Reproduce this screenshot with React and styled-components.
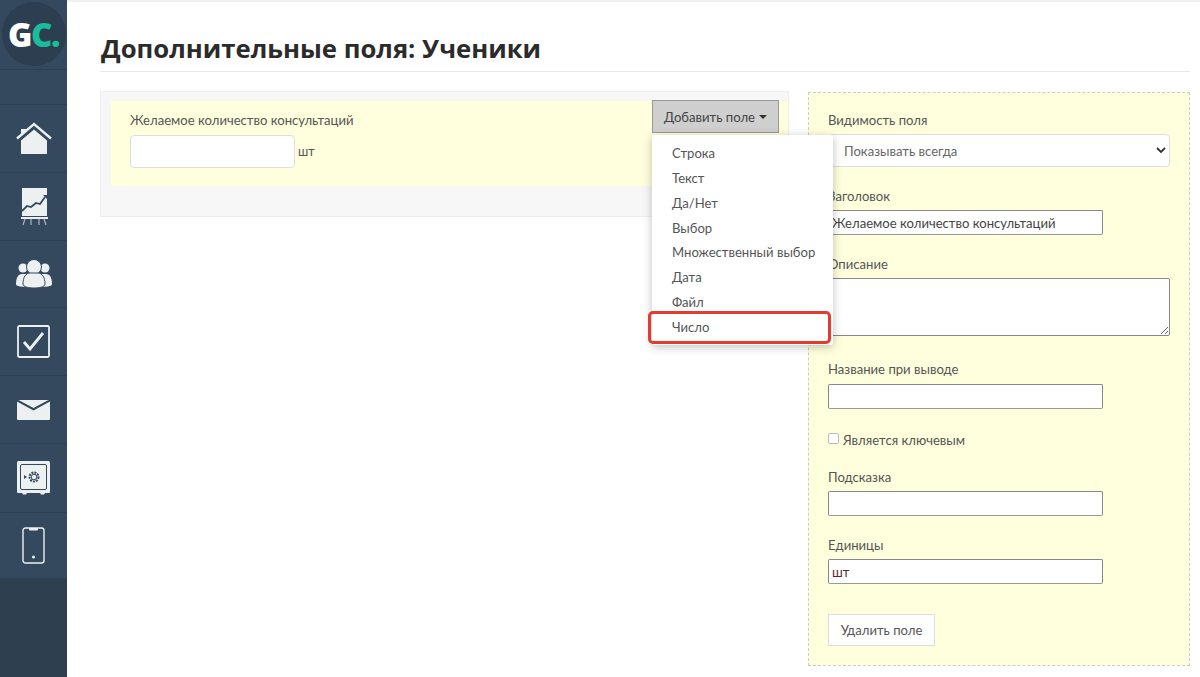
import React from 'react';
import styled, { createGlobalStyle } from 'styled-components';

const GlobalStyle = createGlobalStyle`
  html, body {
    margin: 0;
    padding: 0;
    height: 100%;
    background: #fff;
    overflow: hidden;
  }
  body {
    font-family: Lato, "Open Sans", "Liberation Sans", sans-serif;
    font-size: 13.1px;
    color: #555;
  }
  * { box-sizing: border-box; }
`;

const Page = styled.div`
  display: flex;
  width: 1200px;
  height: 677px;
`;

const Sidebar = styled.nav`
  flex: 0 0 67px;
  display: flex;
  flex-direction: column;
  background: #2e3f50;
`;

const LogoCell = styled.div`
  height: 70px;
  padding-bottom: 1px;
  display: flex;
  align-items: center;
  justify-content: center;
  background: #34495e;
  border-bottom: 1px solid #2e4154;
`;

const LogoCircle = styled.div`
  width: 64px;
  height: 64px;
  border-radius: 50%;
  background: #2c3e50;
  display: flex;
  align-items: center;
  justify-content: center;
  font-family: "Open Sans", sans-serif;
  font-weight: 800;
  font-size: 33px;
  letter-spacing: -1.5px;
  color: #fff;
`;

const LogoAccent = styled.span`
  color: #1abc9c;
`;

const NavCell = styled.a`
  height: ${p => p.$h || 68}px;
  display: flex;
  align-items: center;
  justify-content: center;
  background: #34495e;
  border-bottom: 1px solid #2e4154;
`;

const Main = styled.main`
  flex: 1;
  position: relative;
  border-top: 2px solid #f0f0f0;
  padding: 0 10px 0 33px;
`;

const Title = styled.h1`
  margin: 0 0 19px;
  height: 70px;
  padding: 29px 0 0 1px;
  font-family: "Open Sans", sans-serif;
  font-size: 25.7px;
  line-height: 36px;
  font-weight: 700;
  color: #2b2b2b;
  border-bottom: 1px solid #e8e8e8;
`;

const Columns = styled.div`
  display: flex;
  align-items: flex-start;
  gap: 19px;
`;

const FieldsPanel = styled.section`
  position: relative;
  width: 689px;
  height: 126px;
  padding: 9px 0 0 10px;
  background: #f7f7f7;
  border: 1px solid #eee;
`;

const FieldRow = styled.div`
  height: 85px;
  padding: 11px 19px;
  background: #ffffdd;
`;

const FieldTitle = styled.div`
  line-height: 16px;
  color: #555;
  margin-bottom: 7px;
`;

const UnitRow = styled.div`
  display: flex;
  align-items: center;
  gap: 3px;
  font-size: 12.5px;
  color: #555;
`;

const PreviewInput = styled.input`
  width: 165px;
  height: 33px;
  background: #fff;
  border: 1px solid #ddd;
  border-radius: 4px;
`;

const AddButton = styled.button`
  position: absolute;
  top: 8px;
  right: 9px;
  width: 127px;
  height: 33px;
  padding: 0;
  background: #cfcfcf;
  border: 1px solid #999;
  font: inherit;
  color: #444;
  display: flex;
  align-items: center;
  justify-content: center;
  gap: 4px;
`;

const Caret = styled.span`
  width: 0;
  height: 0;
  border-left: 4px solid transparent;
  border-right: 4px solid transparent;
  border-top: 4px solid #333;
`;

const Dropdown = styled.ul`
  position: absolute;
  top: 43px;
  left: 551px;
  z-index: 5;
  width: 181px;
  height: 210px;
  margin: 0;
  padding: 6px 0;
  list-style: none;
  background: #fff;
  border-radius: 3px;
  box-shadow: 0 2px 10px rgba(0, 0, 0, 0.25);
`;

const DropdownItem = styled.li`
  height: 24.85px;
  padding-left: 20px;
  line-height: 24px;
  color: #555;
`;

const Highlight = styled.div`
  position: absolute;
  left: -4px;
  top: 176px;
  width: 183px;
  height: 33px;
  border: 3.500px solid #e53a30;
  border-radius: 5px;
`;

const EditPanel = styled.form`
  width: 382px;
  height: 574px;
  padding: 18px 19px;
  margin-top: 1px;
  background: #ffffdd;
  border: 1px dashed #ccc;
`;

const Label = styled.label`
  display: block;
  line-height: 18px;
  color: #555;
  margin-bottom: ${p => p.$mb ?? 5}px;
`;

const SelectBox = styled.div`
  position: relative;
  width: 342px;
  height: 33px;
  padding-left: 15px;
  margin-bottom: 20px;
  display: flex;
  align-items: center;
  background: #fff;
  border: 1px solid #ddd;
  border-radius: 4px;
  color: #666;
`;

const Chevron = styled.svg`
  position: absolute;
  right: 3px;
  top: 12px;
`;

const TextInput = styled.input`
  display: block;
  width: 275px;
  height: 25px;
  padding: 0 3px;
  margin-bottom: ${p => p.$mb ?? 20}px;
  background: #fff;
  border: 1px solid #888;
  border-bottom-color: #999;
  border-radius: 2px;
  font: inherit;
  color: ${p => p.$tone || '#444'};
`;

const TextArea = styled.textarea`
  display: block;
  width: 342px;
  height: 58px;
  margin-bottom: 24px;
  background: #fff;
  border: 1px solid #888;
  border-radius: 2px;
`;

const CheckRow = styled.div`
  display: flex;
  align-items: center;
  gap: 4px;
  height: 18px;
  margin-bottom: 19px;
  color: #555;
`;

const CheckBox = styled.span`
  width: 11px;
  height: 11px;
  margin-top: -3px;
  background: #fff;
  border: 1px solid #bbb;
  border-radius: 2px;
`;

const DeleteButton = styled.button`
  display: block;
  width: 107px;
  height: 32px;
  padding: 0;
  background: #fff;
  border: 1px solid #ddd;
  font: inherit;
  color: #555;
`;

const ic = '#ecf0f1';

const HomeIcon = () => (
  <svg width="36" height="34" viewBox="0 0 36 34">
    <path d="M5 7h5v3l-5 4z" fill={ic} />
    <path d="M1 16.5 18 2l17 14.500" fill="none" stroke={ic} strokeWidth="2.400" />
    <path d="M5 18.500 18 7.500l13 11V32H5z" fill={ic} />
  </svg>
);

const ChartIcon = () => (
  <svg width="28" height="40" viewBox="0 0 28 40">
    <path d="M2 1h25v28H2z" fill={ic} />
    <path d="M1 30h27v2H1z" fill={ic} />
    <path d="M2 24l5-5 4 1 5-4 4 1 5-7" fill="none" stroke="#34495e" strokeWidth="1.800" />
    <path d="M23 8h4v4z" fill="#34495e" />
    <path d="M5 32l-2 6M11 32v6M19 32v6M24 32l2 6" stroke="#a9b4bd" strokeWidth="1.200" />
  </svg>
);

const UsersIcon = () => (
  <svg width="36" height="30" viewBox="0 0 36 30">
    <circle cx="7" cy="9" r="4.500" fill={ic} />
    <circle cx="29" cy="9" r="4.500" fill={ic} />
    <path d="M0 25c0-6 2-10 6-10h4v13l-6-.500C2 27 0 26.500 0 25zM36 25c0-6-2-10-6-10h-4v13l6-.500c2-.500 4-1 4-2.500z" fill={ic} />
    <circle cx="18" cy="8" r="7.500" fill={ic} stroke="#34495e" strokeWidth="1" />
    <path d="M7 25c0-7 3-11 7-11h8c4 0 7 4 7 11 0 3-6 4-11 4S7 28 7 25z" fill={ic} stroke="#34495e" strokeWidth="1" />
  </svg>
);

const CheckIcon = () => (
  <svg width="33" height="33" viewBox="0 0 33 33">
    <rect x="1" y="1" width="31" height="31" rx="1.500" fill="none" stroke={ic} strokeWidth="1.800" />
    <path d="M7 17l6 7L26 8" fill="none" stroke={ic} strokeWidth="2.800" />
  </svg>
);

const MailIcon = () => (
  <svg width="33" height="20" viewBox="0 0 33 20">
    <path d="M0 1.500V19a1 1 0 0 0 1 1h31a1 1 0 0 0 1-1V1.500L16.500 10.500z" fill={ic} />
    <path d="M1.500 0h30L16.500 8z" fill={ic} />
  </svg>
);

const SafeIcon = () => (
  <svg width="33" height="34" viewBox="0 0 33 34">
    <path d="M1.500 0h30A1.500 1.500 0 0 1 33 1.500V31a1 1 0 0 1-1 1h-4l-1 1.500h-3L23 32H10l-1 1.500H6L5 32H1a1 1 0 0 1-1-1V1.500A1.500 1.500 0 0 1 1.500 0z" fill={ic} />
    <rect x="3.500" y="3.500" width="26" height="25" rx="1.500" fill="none" stroke="#34495e" strokeWidth="1" />
    <circle cx="17" cy="16" r="4.500" fill="none" stroke="#34495e" strokeWidth="2" strokeDasharray="2 1" />
    <circle cx="17" cy="16" r="2.800" fill="none" stroke="#34495e" strokeWidth="1" />
    <path d="M7 14l3 2-3 2z" fill="#34495e" />
  </svg>
);

const PhoneIcon = () => (
  <svg width="23" height="37" viewBox="0 0 23 37">
    <rect x="1" y="1" width="21" height="35" rx="2.500" fill="none" stroke={ic} strokeWidth="1.400" />
    <path d="M7 1h9v1.500a1 1 0 0 1-1 1H8a1 1 0 0 1-1-1z" fill={ic} />
    <circle cx="11.500" cy="30" r="1.500" fill={ic} />
  </svg>
);

const navItems = [
  { key: 'home', icon: <HomeIcon /> },
  { key: 'chart', icon: <ChartIcon /> },
  { key: 'users', icon: <UsersIcon />, h: 67 },
  { key: 'tasks', icon: <CheckIcon /> },
  { key: 'mail', icon: <MailIcon /> },
  { key: 'safe', icon: <SafeIcon />, h: 69 },
  { key: 'phone', icon: <PhoneIcon />, h: 66 },
];

const fieldTypes = ['Строка', 'Текст', 'Да/Нет', 'Выбор', 'Множественный выбор', 'Дата', 'Файл', 'Число'];

const App = () => (
  <Page>
    <GlobalStyle />
    <Sidebar>
      <LogoCell>
        <LogoCircle>G<LogoAccent>C.</LogoAccent></LogoCircle>
      </LogoCell>
      <NavCell $h={35} />
      {navItems.map(item => (
        <NavCell key={item.key} $h={item.h}>{item.icon}</NavCell>
      ))}
    </Sidebar>
    <Main>
      <Title>Дополнительные поля: Ученики</Title>
      <Columns>
        <FieldsPanel>
          <FieldRow>
            <FieldTitle>Желаемое количество консультаций</FieldTitle>
            <UnitRow>
              <PreviewInput readOnly />
              шт
            </UnitRow>
          </FieldRow>
          <AddButton type="button">Добавить поле <Caret /></AddButton>
          <Dropdown>
            {fieldTypes.map(name => (
              <DropdownItem key={name}>{name}</DropdownItem>
            ))}
            <Highlight />
          </Dropdown>
        </FieldsPanel>
        <EditPanel>
          <Label>Видимость поля</Label>
          <SelectBox>
            Показывать всегда
            <Chevron width="10" height="7" viewBox="0 0 10 7">
              <path d="M1 1l4 4 4-4" fill="none" stroke="#333" strokeWidth="1.800" />
            </Chevron>
          </SelectBox>
          <Label>Заголовок</Label>
          <TextInput readOnly value="Желаемое количество консультаций" />
          <Label>Описание</Label>
          <TextArea readOnly />
          <Label $mb={6}>Название при выводе</Label>
          <TextInput readOnly $mb={22} />
          <CheckRow><CheckBox />Является ключевым</CheckRow>
          <Label>Подсказка</Label>
          <TextInput readOnly />
          <Label>Единицы</Label>
          <TextInput readOnly value="шт" $mb={30} $tone="#5a2a3a" />
          <DeleteButton type="button">Удалить поле</DeleteButton>
        </EditPanel>
      </Columns>
    </Main>
  </Page>
);

export default App;
